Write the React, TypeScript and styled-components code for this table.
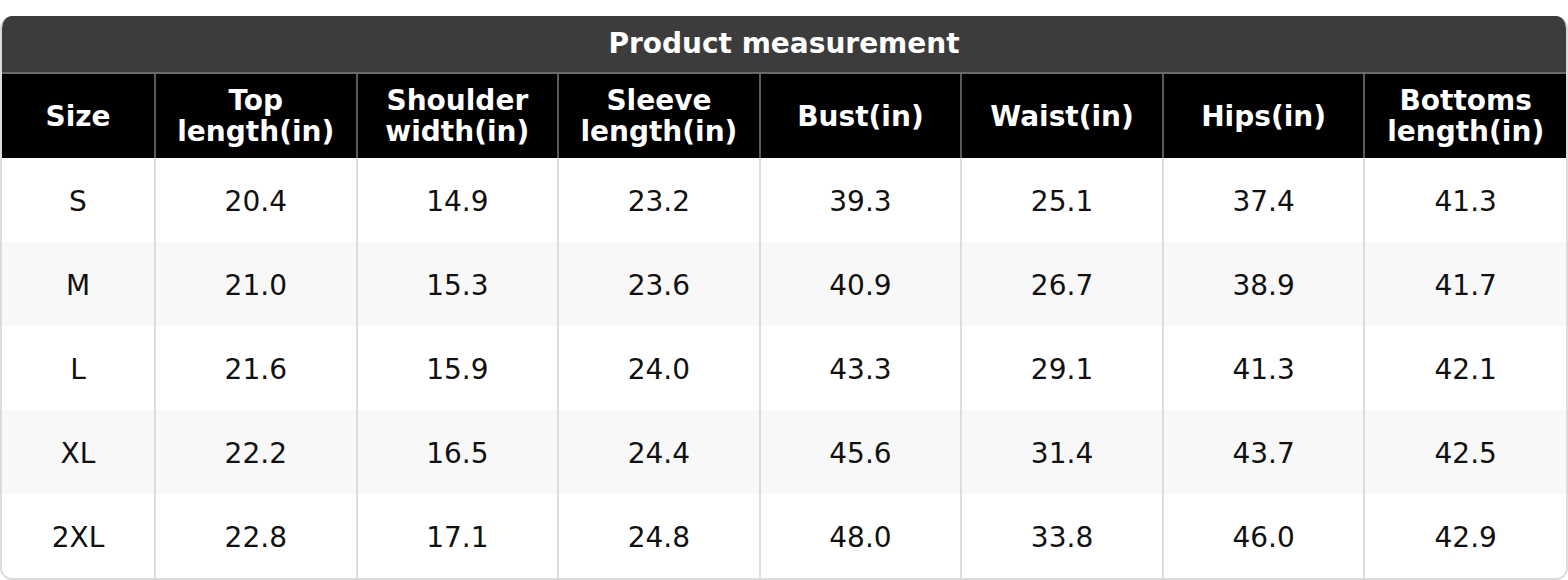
import styled, { createGlobalStyle } from 'styled-components';

const GlobalStyle = createGlobalStyle`
  html, body {
    margin: 0;
    padding: 0;
    background: #ffffff;
    font-family: "DejaVu Sans", Verdana, sans-serif;
  }
`;

const columns = [
  'Size',
  'Top length(in)',
  'Shoulder width(in)',
  'Sleeve length(in)',
  'Bust(in)',
  'Waist(in)',
  'Hips(in)',
  'Bottoms length(in)',
];

const rows = [
  ['S', '20.4', '14.9', '23.2', '39.3', '25.1', '37.4', '41.3'],
  ['M', '21.0', '15.3', '23.6', '40.9', '26.7', '38.9', '41.7'],
  ['L', '21.6', '15.9', '24.0', '43.3', '29.1', '41.3', '42.1'],
  ['XL', '22.2', '16.5', '24.4', '45.6', '31.4', '43.7', '42.5'],
  ['2XL', '22.8', '17.1', '24.8', '48.0', '33.8', '46.0', '42.9'],
];

const App = () => {
  return (
    <>
      <GlobalStyle />
      <Page>
        <Card>
          <Table>
            <colgroup>
              <col style={{ width: 153 }} />
              {columns.slice(1).map((c) => (
                <col key={c} />
              ))}
            </colgroup>
            <thead>
              <tr>
                <TitleCell colSpan={columns.length}>Product measurement</TitleCell>
              </tr>
              <tr>
                {columns.map((c) => (
                  <HeadCell key={c}>
                    {c.includes(' ') ? (
                      <>
                        {c.split(' ')[0]}
                        <br />
                        {c.split(' ').slice(1).join(' ')}
                      </>
                    ) : (
                      c
                    )}
                  </HeadCell>
                ))}
              </tr>
            </thead>
            <tbody>
              {rows.map((r, i) => (
                <Row key={r[0]} $striped={i % 2 === 1}>
                  {r.map((v, j) => (
                    <Cell key={j}>{v}</Cell>
                  ))}
                </Row>
              ))}
            </tbody>
          </Table>
        </Card>
      </Page>
    </>
  );
};

export default App;

const Page = styled.div`
  padding-top: 16px;
  width: 1568px;
`;

const Card = styled.div`
  border-radius: 12px;
  overflow: hidden;
  border: 2px solid #dcdcdc;
  border-top: none;
  box-sizing: border-box;
`;

const Table = styled.table`
  width: 100%;
  border-collapse: collapse;
  table-layout: fixed;

  th,
  td {
    box-sizing: border-box;
  }
`;

const TitleCell = styled.th`
  background: #3c3c3c;
  color: #ffffff;
  font-size: 28px;
  font-weight: bold;
  line-height: 32px;
  height: 57px;
  padding: 0;
  text-align: center;
  border-bottom: 2px solid #6a6a6a;
`;

const HeadCell = styled.th`
  background: #000000;
  color: #ffffff;
  font-size: 28px;
  font-weight: bold;
  line-height: 31px;
  height: 85px;
  padding: 0 4px;
  text-align: center;
  vertical-align: middle;
  border-left: 2px solid #5a5a5a;

  &:first-child {
    border-left: none;
  }
`;

const Row = styled.tr<{ $striped: boolean }>`
  background: ${(p) => (p.$striped ? '#f8f8f8' : '#ffffff')};
`;

const Cell = styled.td`
  color: #111111;
  font-size: 28px;
  height: 84px;
  padding: 2px 0 0;
  text-align: center;
  vertical-align: middle;
  border-left: 2px solid #dddddd;

  &:first-child {
    border-left: none;
  }
`;
